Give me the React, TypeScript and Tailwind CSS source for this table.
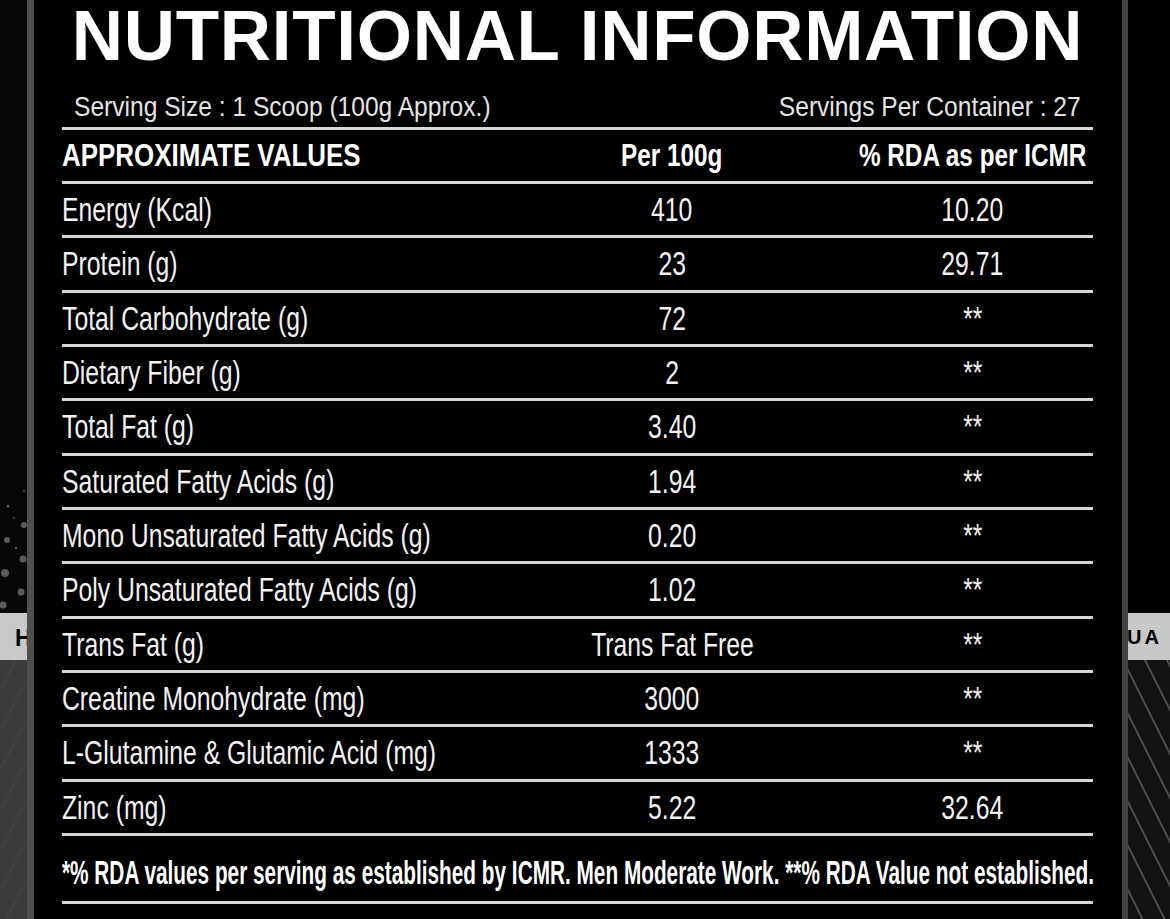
import React from "react";

const rows: [string, string, string][] = [
  ["Energy (Kcal)", "410", "10.20"],
  ["Protein (g)", "23", "29.71"],
  ["Total Carbohydrate (g)", "72", "**"],
  ["Dietary Fiber (g)", "2", "**"],
  ["Total Fat (g)", "3.40", "**"],
  ["Saturated Fatty Acids (g)", "1.94", "**"],
  ["Mono Unsaturated Fatty Acids (g)", "0.20", "**"],
  ["Poly Unsaturated Fatty Acids (g)", "1.02", "**"],
  ["Trans Fat (g)", "Trans Fat Free", "**"],
  ["Creatine Monohydrate (mg)", "3000", "**"],
  ["L-Glutamine & Glutamic Acid (mg)", "1333", "**"],
  ["Zinc (mg)", "5.22", "32.64"],
];

const dots = [
  [24, 18, 1],
  [8, 33, 1.5],
  [24, 52, 3],
  [7, 67, 3],
  [23, 86, 3.5],
  [5, 100, 4],
  [21, 119, 3.5],
  [3, 132, 3.5],
  [14, 45, 1],
  [16, 75, 1.2],
];

export default function App() {
  return (
    <div className="flex h-[919px] w-[1170px] overflow-hidden bg-black font-['Liberation_Sans',Arial,sans-serif]">
      {/* left backdrop */}
      <div className="flex w-[27px] flex-col">
        <div className="flex h-[613px] flex-col justify-end bg-[#070707]">
          <svg width="27" height="140" viewBox="0 0 27 140">
            {dots.map(([x, y, r], i) => (
              <circle key={i} cx={x} cy={y} r={r} fill="#5a5a5a" />
            ))}
          </svg>
        </div>
        <div className="relative h-[47px] overflow-hidden bg-[#c9c9c9]">
          <span className="absolute left-[15px] top-[14px] text-[23px] font-bold leading-none text-black">H</span>
        </div>
        <div className="flex-1 bg-[#3c3c3c]">
          <svg width="27" height="259" viewBox="0 0 27 259">
            {[0, 40, 80, 120, 160, 200, 240].map((y) => (
              <line key={y} x1={0} y1={y + 30} x2={27} y2={y - 20} stroke="#444444" strokeWidth="1.5" />
            ))}
          </svg>
        </div>
      </div>
      <div className="w-[7px] bg-[#4f4f4f]" />

      {/* main panel */}
      <div className="flex w-[1088px] flex-col bg-black pl-[28px] pr-[29px] text-[#f2f2f2]">
        <div className="flex h-[71px] items-start justify-center overflow-visible">
          <h1 className="whitespace-nowrap text-[71px] font-bold leading-none tracking-[0.7px] text-white">
            NUTRITIONAL INFORMATION
          </h1>
        </div>
        <div className="flex h-[59px] items-end justify-between border-b-[3px] border-[#d6d6d6] px-[12px] pb-[6px] text-[27px] leading-[27px] text-[#e4e4e4]">
          <span className="inline-block origin-left scale-x-[0.91] whitespace-nowrap">
            Serving Size : 1 Scoop (100g Approx.)
          </span>
          <span className="inline-block origin-right scale-x-[0.91] whitespace-nowrap">
            Servings Per Container : 27
          </span>
        </div>
        <div className="grid h-[54px] grid-cols-[430px_360px_241px] items-center border-b-[3px] border-[#d6d6d6] text-[32px] font-bold leading-[51px] text-white">
          <div className="flex">
            <span className="inline-block origin-left scale-x-[0.81] whitespace-nowrap">APPROXIMATE VALUES</span>
          </div>
          <div className="flex justify-center">
            <span className="inline-block shrink-0 scale-x-[0.76] whitespace-nowrap">Per 100g</span>
          </div>
          <div className="flex justify-center">
            <span className="inline-block shrink-0 scale-x-[0.76] whitespace-nowrap">% RDA as per ICMR</span>
          </div>
        </div>
        {rows.map(([name, val, rda]) => (
          <div
            key={name}
            className="grid h-[54.33px] grid-cols-[430px_360px_241px] items-center border-b-[3px] border-[#d6d6d6] text-[33px] leading-[51px]"
          >
            <div className="flex">
              <span className="inline-block shrink-0 origin-left scale-x-[0.75] whitespace-nowrap">{name}</span>
            </div>
            <div className="flex justify-center">
              <span className="inline-block shrink-0 scale-x-[0.75] whitespace-nowrap">{val}</span>
            </div>
            <div className="flex justify-center">
              <span className="inline-block shrink-0 scale-x-[0.75] whitespace-nowrap">{rda}</span>
            </div>
          </div>
        ))}
        <div className="flex h-[68px] items-center border-b-[3px] border-[#d6d6d6] pt-[8px] text-[33px] font-bold leading-[51px] text-white">
          <span className="inline-block shrink-0 origin-left scale-x-[0.63] whitespace-nowrap">
            *% RDA values per serving as established by ICMR. Men Moderate Work. **% RDA Value not established.
          </span>
        </div>
      </div>

      {/* right backdrop */}
      <div className="w-[6px] bg-[#434343]" />
      <div className="flex w-[42px] flex-col">
        <div className="h-[613px] bg-black" />
        <div className="relative h-[47px] overflow-hidden bg-[#c8c8c8]">
          <span className="absolute left-[-1px] top-[14px] text-[20px] font-semibold leading-none tracking-[3px] text-black">
            UA
          </span>
        </div>
        <div className="flex-1 bg-[#121212]">
          <svg width="42" height="259" viewBox="0 0 42 259">
            {[-120, -98, -76, -54, -32, -10, 12, 34].map((x, i) => (
              <line key={i} x1={x} y1={-10} x2={x + 140} y2={270} stroke="#4e4e4e" strokeWidth="2" />
            ))}
          </svg>
        </div>
      </div>
    </div>
  );
}
